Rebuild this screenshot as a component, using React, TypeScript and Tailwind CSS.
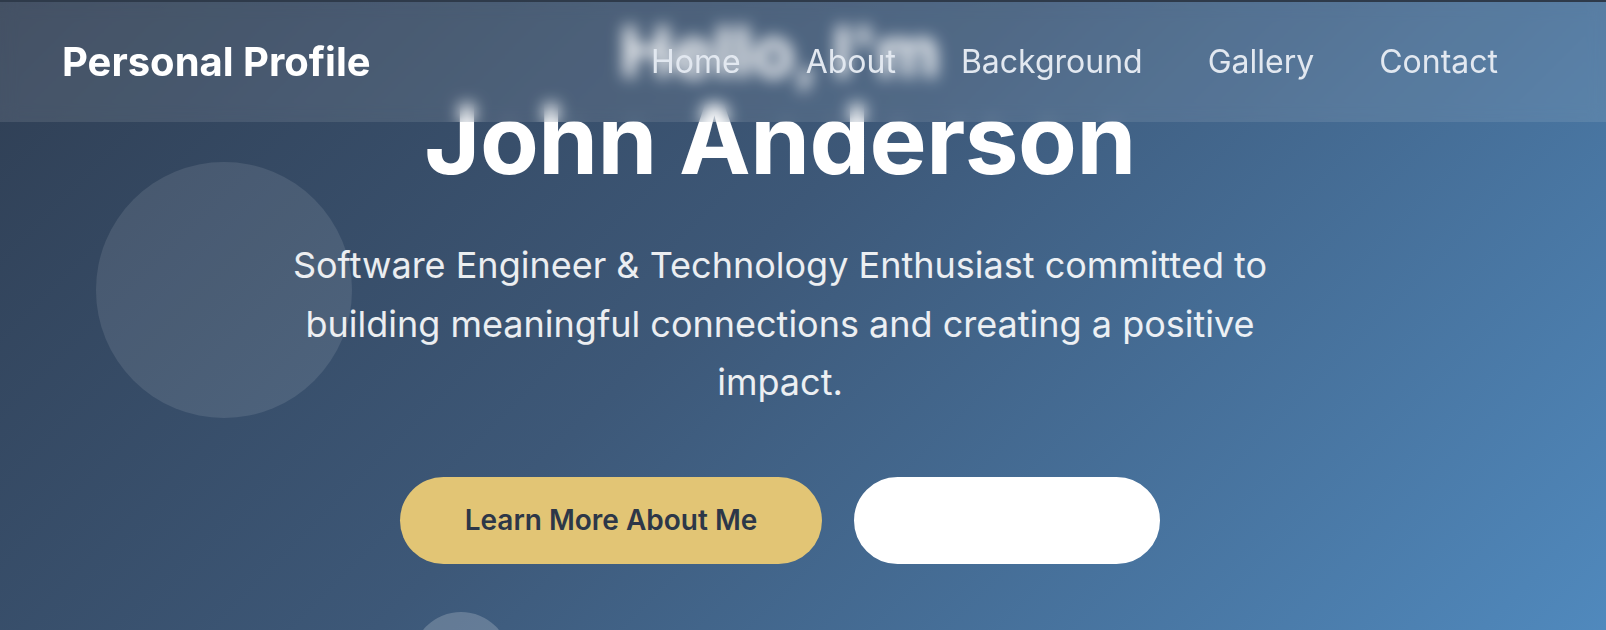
import React from "react";

export default function App() {
  return (
    <div
      className="relative h-[630px] w-full overflow-hidden bg-[linear-gradient(135deg,#2f3e53_0%,#3d5878_45%,#5089bd_100%)]"
      style={{ fontFamily: "Inter, 'Noto Sans', sans-serif" }}
    >
      {/* decorative circles */}
      <div className="absolute left-[96px] top-[162px] h-[256px] w-[256px] rounded-full bg-white/10" />
      <div className="absolute left-[412px] top-[612px] h-[98px] w-[98px] rounded-full bg-white/20" />

      {/* hero content */}
      <main className="relative mr-[46px] flex flex-col items-center text-center">
        <p className="mt-[17px] text-[70px] font-bold leading-none text-white">Hello, I'm</p>
        <h1 className="mt-[4px] text-[96px] font-bold leading-none tracking-[-0.5px] text-white">
          John Anderson
        </h1>
        <p className="mt-[49px] max-w-[1024px] text-[36px] leading-[1.625] text-white/90">
          Software Engineer &amp; Technology Enthusiast committed to building meaningful
          connections and creating a positive impact.
        </p>
        <div className="mt-[65px] flex gap-[32px]">
          <button className="h-[87px] rounded-full bg-[#e2c575] px-[65px] text-[28px] font-semibold text-[#2d3748]">
            Learn More About Me
          </button>
          <button className="h-[87px] w-[306px] rounded-full border-2 border-white bg-white text-[28px] font-semibold text-white">
            Get In Touch
          </button>
        </div>
      </main>

      {/* top strip */}
      <div className="absolute left-0 top-0 h-[2px] w-full bg-[#2e3a4a]" />

      {/* header */}
      <header className="absolute left-0 right-0 top-[2px] h-[120px] bg-white/10 backdrop-blur-sm">
        <div className="mr-[46px] flex h-full items-center justify-between px-[62px]">
          <div className="text-[40px] font-bold text-white">Personal Profile</div>
          <nav className="flex items-center gap-[65px] text-[32px] text-[#e2e8f0]">
            <a>Home</a>
            <a>About</a>
            <a>Background</a>
            <a>Gallery</a>
            <a>Contact</a>
          </nav>
        </div>
      </header>
    </div>
  );
}
